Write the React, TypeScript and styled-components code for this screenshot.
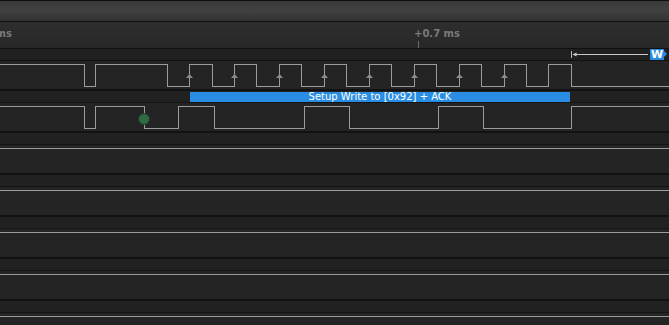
import React from 'react';
import styled, {createGlobalStyle} from "styled-components";

const W = 669;
const HIGH = 3.5;
const LOW = 25.5;

const GlobalStyle = createGlobalStyle`
  html, body {
    margin: 0;
    padding: 0;
    background: #232323;
    overflow: hidden;
  }
`

type Channel = {
    edges: number[];
    arrows?: number[];
    dot?: number;
}

const channels: Channel[] = [
    {
        edges: [84.5, 95.5, 167.5, 189.5, 212.5, 234.5, 256.5, 279.5, 301.5, 324.5, 346.5, 369.5,
            391.5, 414.5, 436.5, 459.5, 481.5, 504.5, 526.5, 548.5, 571.5],
        arrows: [189.5, 234.5, 279.5, 324.5, 369.5, 414.5, 459.5, 504.5],
    },
    {
        edges: [84.5, 95.5, 144.5, 178.5, 214.5, 304.5, 349.5, 438.5, 483.5, 571.5],
        dot: 144,
    },
    {edges: []},
    {edges: []},
    {edges: []},
    {edges: []},
    {edges: []},
];

const frames = [
    {channel: 0, start: 190, end: 570, label: 'Setup Write to [0x92] + ACK'},
];

// path for a digital signal starting high, toggling at each edge
const wavePath = (edges: number[]) => {
    let level = HIGH;
    let d = `M0 ${level}`;
    edges.forEach(x => {
        d += ` H${x}`;
        level = level === HIGH ? LOW : HIGH;
        d += ` V${level}`;
    });
    return d + ` H${W}`;
};

export default function App() {
    return (
        <Screen>
            <GlobalStyle/>
            <HeaderBar/>
            <Ruler>
                <TickLabel $x={-34}>+0.6 ms</TickLabel>
                <TickLabel $x={414}>+0.7 ms</TickLabel>
                <Tick $x={418}/>
            </Ruler>
            <MarkerStrip>
                <svg width="79" height="11">
                    <path d="M0.5 2 V9" stroke="#bdbdbd" strokeWidth="1"/>
                    <path d="M2 5.5 H77" stroke="#c9c9c9" strokeWidth="1"/>
                    <path d="M1.5 5.5 L5.5 3.5 L5.5 7.5 Z" fill="#c9c9c9"/>
                </svg>
                <Flag>W</Flag>
            </MarkerStrip>
            {channels.map((ch, i) => (
                <ChannelGroup key={i}>
                    <Trace>
                        <svg width={W} height="28">
                            <path d={wavePath(ch.edges)} stroke="#9b9b9b" strokeWidth="1" fill="none"
                                  shapeRendering="crispEdges"/>
                            {ch.arrows?.map(x => (
                                <path key={x} d={`M${x - 3.5} 17 L${x} 13 L${x + 3.5} 17 Z`} fill="#8c8c8c"/>
                            ))}
                            {ch.dot !== undefined && (
                                <circle cx={ch.dot} cy="16" r="5.5" fill="#2f6a45" stroke="#1c3d28" strokeWidth="1"/>
                            )}
                        </svg>
                    </Trace>
                    <AnalyzerStrip>
                        {frames.filter(f => f.channel === i).map(f => (
                            <Frame key={f.label} $left={f.start} $width={f.end - f.start}>{f.label}</Frame>
                        ))}
                    </AnalyzerStrip>
                </ChannelGroup>
            ))}
        </Screen>
    );
}

const Screen = styled.div`
  display: flex;
  flex-direction: column;
  width: 100%;
  height: 100vh;
  overflow: hidden;
  background: #232323;
  font-family: "DejaVu Sans", Verdana, sans-serif;
`

const HeaderBar = styled.div`
  flex: 0 0 20px;
  border-top: 1px solid #0e0e0e;
  border-bottom: 1px solid #101010;
  background: linear-gradient(180deg, #3a3a3a 0%, #414141 45%, #333333 100%);
`

const Ruler = styled.div`
  position: relative;
  flex: 0 0 26px;
  border-bottom: 1px solid #101010;
  background: linear-gradient(180deg, #2e2e2e, #282828);
`

const TickLabel = styled.span<{ $x: number }>`
  position: absolute;
  left: ${p => p.$x}px;
  top: 6px;
  font-size: 10px;
  font-weight: bold;
  line-height: 12px;
  color: #7a7a7a;
  white-space: nowrap;
`

const Tick = styled.div<{ $x: number }>`
  position: absolute;
  left: ${p => p.$x}px;
  top: 19px;
  width: 1px;
  height: 7px;
  background: #6c6c6c;
`

const MarkerStrip = styled.div`
  flex: 0 0 11px;
  min-height: 0;
  display: flex;
  justify-content: flex-end;
  align-items: center;
  padding-right: 5px;
  border-bottom: 1px solid #111;
  background: #202020;
`

const Flag = styled.div`
  position: relative;
  width: 14px;
  height: 11px;
  background: #2a8de4;
  color: #fff;
  font-size: 11px;
  font-weight: bold;
  line-height: 11px;
  text-align: center;

  &::after {
    content: '';
    position: absolute;
    right: -3px;
    top: 2px;
    border-left: 3px solid #2a8de4;
    border-top: 3px solid transparent;
    border-bottom: 3px solid transparent;
  }
`

const ChannelGroup = styled.div`
  flex: 0 0 42px;
  display: flex;
  flex-direction: column;
`

const Trace = styled.div`
  height: 28px;
  background: #242424;
  border-bottom: 2px solid #121212;

  svg {
    display: block;
  }
`

const AnalyzerStrip = styled.div`
  position: relative;
  height: 11px;
  background: #212121;
  border-bottom: 1px solid #141414;
`

const Frame = styled.div<{ $left: number; $width: number }>`
  position: absolute;
  left: ${p => p.$left}px;
  width: ${p => p.$width}px;
  top: 1px;
  height: 10px;
  background: #2a8de4;
  color: #fff;
  font-size: 10px;
  line-height: 10px;
  text-align: center;
  white-space: nowrap;
`
